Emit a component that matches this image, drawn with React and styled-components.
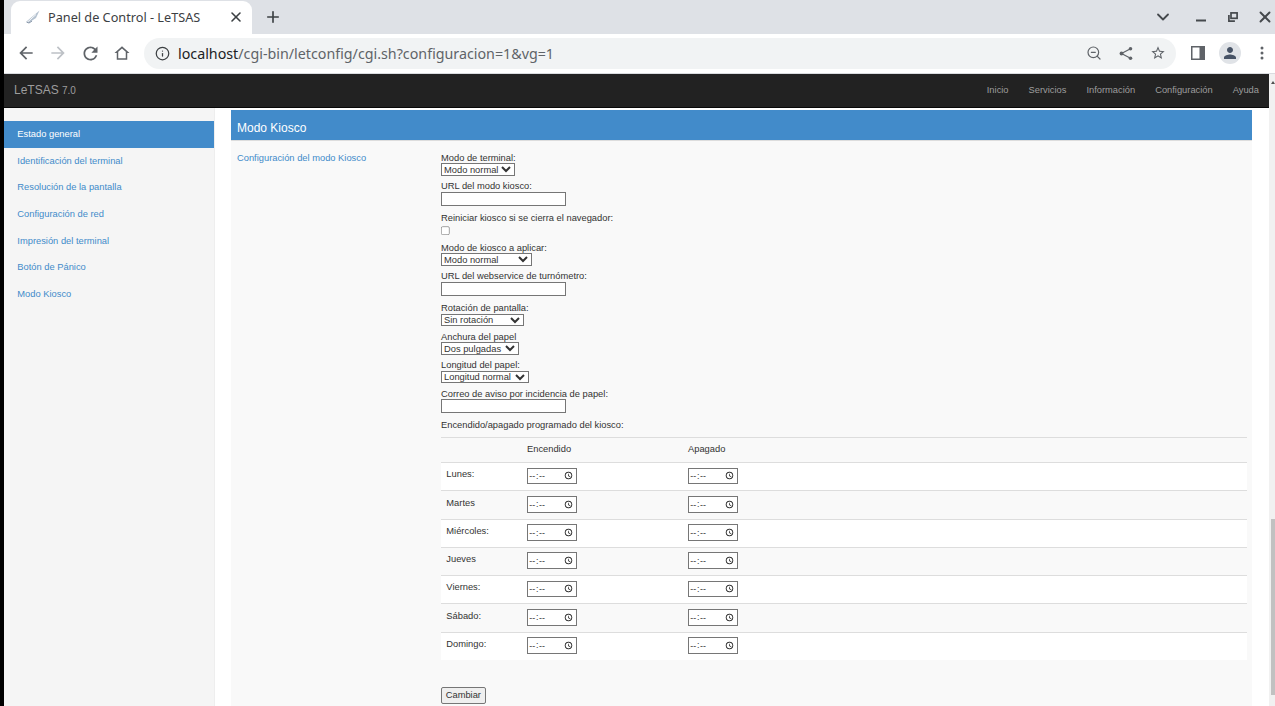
import React from 'react';
import styled, { createGlobalStyle } from 'styled-components';
import { Info, ZoomOut, ChevronDown, X, Plus } from 'lucide-react';

const Global = createGlobalStyle`
  html, body { margin: 0; padding: 0; height: 706px; overflow: hidden; background: #000; }
  * { box-sizing: border-box; }
  #root { height: 706px; }
`;

const Root = styled.div`
  display: flex;
  flex-direction: column;
  width: 1275px;
  height: 706px;
  padding-left: 4px;
  background: #000;
  overflow: hidden;
`;

// ---- browser frame
const TabStrip = styled.div`
  display: flex;
  align-items: flex-end;
  height: 34px;
  flex: none;
  background: #dee1e6;
  font-family: "Noto Sans", sans-serif;
`;

const Tab = styled.div`
  display: flex;
  align-items: center;
  width: 241px;
  height: 33px;
  margin-left: 7px;
  padding-left: 15px;
  padding-bottom: 1px;
  background: #fff;
  border-radius: 9px 9px 0 0;
  color: #3c4043;
  font-size: 12.7px;
`;

const TabTitle = styled.span`
  margin-left: 8px;
  flex: 1;
  white-space: nowrap;
`;

const TabClose = styled(X)`
  margin-right: 8px;
  color: #3c4043;
`;

const NewTab = styled(Plus)`
  align-self: center;
  margin-left: 12px;
  color: #3c4043;
`;

const WindowControls = styled.div`
  display: flex;
  align-self: center;
  gap: 12px;
  margin-left: auto;
  color: #45494d;
`;

const ControlCell = styled.span`
  display: flex;
  align-items: center;
  justify-content: center;
  width: 20px;
  height: 20px;
  margin-right: ${(p) => p.$after || 0}px;
`;

const Toolbar = styled.div`
  display: flex;
  align-items: center;
  height: 40px;
  flex: none;
  padding: 3px 0 4px 6px;
  background: #fff;
  border-bottom: 1px solid #dadce0;
  color: #5f6368;
`;

const IconCell = styled.span`
  display: flex;
  align-items: center;
  justify-content: center;
  width: 32px;
  flex: none;
  color: ${(p) => p.$color || '#5f6368'};
`;

const Omnibox = styled.div`
  display: flex;
  align-items: center;
  width: 1032px;
  height: 31px;
  flex: none;
  margin: 0 6px;
  padding: 0 2px 0 11px;
  border-radius: 16px;
  background: #f1f3f4;
  font-family: "Noto Sans", sans-serif;
  font-size: 14.27px;
  color: #5f6368;
`;

const Host = styled.span`
  margin-left: 8px;
  color: #202124;
`;

const OmniIcons = styled.div`
  display: flex;
  margin-left: auto;
`;

const Avatar = styled.div`
  display: flex;
  align-items: center;
  justify-content: center;
  width: 22px;
  height: 22px;
  border-radius: 50%;
  background: #e0e3e7;
`;

// ---- page
const Viewport = styled.div`
  display: flex;
  flex: 1;
  min-height: 0;
  background: #fff;
`;

const Page = styled.div`
  zoom: 0.6667;
  flex: 1;
  min-width: 0;
  font-family: "Liberation Sans", Arial, sans-serif;
  font-size: 14px;
  line-height: 20px;
  color: #333;
`;

const Navbar = styled.div`
  display: flex;
  align-items: center;
  height: 51px;
  background: #222;
  border-bottom: 1px solid #080808;
`;

const Brand = styled.a`
  padding: 0 15px;
  color: #9d9d9d;
  font-size: 18px;
  line-height: 20px;

  small {
    font-size: 15px;
    color: #9d9d9d;
  }
`;

const Menu = styled.nav`
  display: flex;
  margin-left: auto;
`;

const MenuLink = styled.a`
  padding: 0 15px;
  color: #9d9d9d;
`;

const Columns = styled.div`
  display: flex;
  height: 960px;
`;

const Sidebar = styled.ul`
  width: 316.25px;
  flex: none;
  margin: 0;
  padding: 20px 0 0;
  list-style: none;
  background: #f5f5f5;
  border-right: 1px solid #eee;
`;

const SideItem = styled.li`
  padding: 10px 20px;
  color: ${(p) => (p.$active ? '#fff' : '#428bca')};
  background: ${(p) => (p.$active ? '#428bca' : 'transparent')};
`;

const Main = styled.main`
  flex: 1;
  min-width: 0;
  padding: 3px 25.5px 0 24.25px;
`;

const Panel = styled.section`
  background: #f9f9f9;
  padding-bottom: 40px;
`;

const PanelHead = styled.h3`
  margin: 0;
  padding: 15px 9px 0;
  height: 46px;
  background: #428bca;
  border-bottom: 2px solid #ddd;
  color: #fff;
  font-size: 18px;
  font-weight: 400;
  line-height: 26px;
`;

const PanelBody = styled.div`
  display: flex;
  padding: 18px 7.5px 0 9px;
`;

const PanelLink = styled.a`
  width: 306px;
  flex: none;
  color: #428bca;
  line-height: 16px;
`;

const Form = styled.form`
  flex: 1;
  min-width: 0;
`;

const Label = styled.div`
  height: 16px;
  line-height: 16px;
  white-space: nowrap;
`;

const Select = styled.select`
  display: block;
  width: ${(p) => p.$w}px;
  height: 19px;
  margin-bottom: 8px;
  padding: 0;
  border: 1px solid #767676;
  border-radius: 0;
  background-color: #fff;
  font: inherit;
  font-size: 14px;
  line-height: normal;
  color: #333;
`;

const TextInput = styled.input`
  display: block;
  width: 187px;
  height: 21px;
  margin-bottom: 10.5px;
  padding: 1px 2px;
  border: 1px solid #767676;
  border-radius: 0;
  background: #fff;
`;

const Check = styled.input`
  display: block;
  width: 14px;
  height: 14px;
  margin: 4px 0 10.5px;
`;

const Table = styled.table`
  width: 100%;
  margin: 9px 0 41.5px;
  border-collapse: collapse;

  th, td {
    padding: 8px;
    text-align: left;
    vertical-align: top;
    font-weight: 400;
    border-top: 1px solid #ddd;
  }

  td { padding: 7px 8px 8.9px; }
  td:first-child { padding-top: 8px; }

  tbody tr:nth-child(odd) { background: #fff; }
`;

const TimeInput = styled.input`
  display: block;
  width: 75px;
  height: 25px;
  padding: 1px;
  border: 1px solid #767676;
  border-radius: 0;
  background: #fff;
  font-family: inherit;
  font-size: 13.33px;
  color: #333;

  &::-webkit-datetime-edit-ampm-field { display: none; }
`;

const SubmitButton = styled.button`
  display: block;
  width: 67px;
  height: 25px;
  padding: 0;
  border: 1px solid #767676;
  border-radius: 3px;
  background: #efefef;
  font: inherit;
  color: #333;
`;

const Scrollbar = styled.div`
  position: relative;
  width: 6px;
  flex: none;
  background: #f1f1f1;
`;

const ScrollArrow = styled.div`
  position: absolute;
  top: 7px;
  right: 0;
  border: 2px solid transparent;
  border-top: 0;
  border-bottom: 3px solid #505050;
`;

const Thumb = styled.div`
  position: absolute;
  top: 445px;
  right: 0;
  width: 4px;
  height: 176px;
  background: #c1c1c1;
`;

const Glyph = ({ size, d, rule }) => (
  <svg width={size} height={size} viewBox="0 0 24 24" fill="currentColor">
    <path d={d} fillRule={rule} />
  </svg>
);

const BACK = 'M20 11H7.83l5.59-5.59L12 4l-8 8 8 8 1.41-1.41L7.83 13H20v-2z';
const FORWARD = 'M12 4l-1.41 1.41L16.17 11H4v2h12.17l-5.58 5.59L12 20l8-8z';
const RELOAD = 'M17.65 6.35A7.958 7.958 0 0 0 12 4c-4.42 0-7.99 3.58-7.99 8s3.57 8 7.99 8c3.73 0 6.84-2.55 7.73-6h-2.08A5.99 5.99 0 0 1 12 18c-3.31 0-6-2.69-6-6s2.69-6 6-6c1.66 0 3.14.69 4.22 1.78L13 11h7V4l-2.35 2.35z';
const HOME = 'M12 3 2 12h3v9h14v-9h3L12 3zm0 2.9 5 4.5V19H7v-8.6l5-4.5z';
const STAR = 'M22 9.24l-7.19-.62L12 2 9.19 8.63 2 9.24l5.46 4.73L5.82 21 12 17.27 18.18 21l-1.63-7.03L22 9.24zM12 15.4l-3.76 2.27 1-4.28-3.32-2.88 4.38-.38L12 6.1l1.71 4.04 4.38.38-3.32 2.88 1 4.28L12 15.4z';
const PERSON = 'M12 12c2.21 0 4-1.79 4-4s-1.79-4-4-4-4 1.79-4 4 1.79 4 4 4zm0 2c-2.67 0-8 1.34-8 4v2h16v-2c0-2.66-5.33-4-8-4z';

const Favicon = () => (
  <svg width="14" height="14" viewBox="0 0 14 14">
    <path d="M0.5 11.5 L13.5 0.5 L10 8 L3 12.5 Z" fill="#b5c2d0" />
    <path d="M1 12.5 L10 4.5" stroke="#fff" strokeWidth="0.9" fill="none" />
    <path d="M0.5 12 L3 13 L6 11" stroke="#7f8fa3" strokeWidth="1" fill="none" />
  </svg>
);

const Minimize = () => (
  <svg width="10" height="12" viewBox="0 0 10 12">
    <path d="M0 9.5h10" stroke="currentColor" strokeWidth="2" />
  </svg>
);

const Restore = () => (
  <svg width="10" height="10" viewBox="0 0 10 10" fill="none" stroke="currentColor" strokeWidth="1.7">
    <rect x="3" y="0.9" width="6.1" height="5.4" />
    <path d="M0.9 3v6.1h6" />
  </svg>
);

const ShareIcon = () => (
  <svg width="14" height="15" viewBox="0 0 14 15" fill="currentColor" stroke="currentColor" strokeWidth="1.2">
    <path d="M11.5 2.7 2.5 7.5l9 4.8" fill="none" />
    <circle cx="11.5" cy="2.7" r="1.8" stroke="none" />
    <circle cx="2.5" cy="7.5" r="1.9" stroke="none" />
    <circle cx="11.5" cy="12.3" r="1.8" stroke="none" />
  </svg>
);

const SidePanelIcon = () => (
  <svg width="14" height="14" viewBox="0 0 14 14">
    <path d="M0 0h14v14H0z M1.5 1.5v11H8.500v-11z" fillRule="evenodd" fill="#5f6368" />
  </svg>
);

const Dots = () => (
  <svg width="4" height="14" viewBox="0 0 4 14" fill="currentColor">
    <circle cx="2" cy="2" r="1.5" />
    <circle cx="2" cy="7" r="1.5" />
    <circle cx="2" cy="12" r="1.5" />
  </svg>
);

const menu = ['Inicio', 'Servicios', 'Información', 'Configuración', 'Ayuda'];
const sections = [
  'Estado general',
  'Identificación del terminal',
  'Resolución de la pantalla',
  'Configuración de red',
  'Impresión del terminal',
  'Botón de Pánico',
  'Modo Kiosco',
];
const days = ['Lunes:', 'Martes', 'Miércoles:', 'Jueves', 'Viernes:', 'Sábado:', 'Domingo:'];

const App = () => (
  <Root>
    <Global />
    <TabStrip>
      <Tab>
        <Favicon />
        <TabTitle>Panel de Control - LeTSAS</TabTitle>
        <TabClose size={16} strokeWidth={2.4} />
      </Tab>
      <NewTab size={18} strokeWidth={2.2} />
      <WindowControls>
        <ControlCell $after={6}><ChevronDown size={20} strokeWidth={2.2} /></ControlCell>
        <ControlCell><Minimize /></ControlCell>
        <ControlCell><Restore /></ControlCell>
        <ControlCell><X size={18} strokeWidth={2.6} /></ControlCell>
      </WindowControls>
    </TabStrip>
    <Toolbar>
      <IconCell><Glyph size={20} d={BACK} /></IconCell>
      <IconCell $color="#bdc1c6"><Glyph size={20} d={FORWARD} /></IconCell>
      <IconCell><Glyph size={21} d={RELOAD} /></IconCell>
      <IconCell><Glyph size={18} d={HOME} /></IconCell>
      <Omnibox>
        <Info size={15} strokeWidth={2} color="#3c4043" />
        <Host>localhost</Host>
        <span>/cgi-bin/letconfig/cgi.sh?configuracion=1&amp;vg=1</span>
        <OmniIcons>
          <IconCell><ZoomOut size={16} strokeWidth={1.8} /></IconCell>
          <IconCell><ShareIcon /></IconCell>
          <IconCell><Glyph size={16} d={STAR} /></IconCell>
        </OmniIcons>
      </Omnibox>
      <IconCell><SidePanelIcon /></IconCell>
      <IconCell $color="#475366">
        <Avatar><Glyph size={18} d={PERSON} /></Avatar>
      </IconCell>
      <IconCell><Dots /></IconCell>
    </Toolbar>
    <Viewport>
      <Page>
        <Navbar>
          <Brand>LeTSAS <small>7.0</small></Brand>
          <Menu>
            {menu.map((m) => <MenuLink key={m}>{m}</MenuLink>)}
          </Menu>
        </Navbar>
        <Columns>
          <Sidebar>
            {sections.map((s, i) => <SideItem key={s} $active={i === 0}>{s}</SideItem>)}
          </Sidebar>
          <Main>
            <Panel>
              <PanelHead>Modo Kiosco</PanelHead>
              <PanelBody>
                <PanelLink>Configuración del modo Kiosco</PanelLink>
                <Form>
                  <Label>Modo de terminal:</Label>
                  <Select $w={111}><option>Modo normal</option></Select>
                  <Label>URL del modo kiosco:</Label>
                  <TextInput type="text" />
                  <Label>Reiniciar kiosco si se cierra el navegador:</Label>
                  <Check type="checkbox" />
                  <Label>Modo de kiosco a aplicar:</Label>
                  <Select $w={136}><option>Modo normal</option></Select>
                  <Label>URL del webservice de turnómetro:</Label>
                  <TextInput type="text" />
                  <Label>Rotación de pantalla:</Label>
                  <Select $w={124}><option>Sin rotación</option></Select>
                  <Label>Anchura del papel</Label>
                  <Select $w={117}><option>Dos pulgadas</option></Select>
                  <Label>Longitud del papel:</Label>
                  <Select $w={132}><option>Longitud normal</option></Select>
                  <Label>Correo de aviso por incidencia de papel:</Label>
                  <TextInput type="text" />
                  <Label>Encendido/apagado programado del kiosco:</Label>
                  <Table>
                    <colgroup>
                      <col width="121" />
                      <col width="241.5" />
                      <col />
                    </colgroup>
                    <thead>
                      <tr><th /><th>Encendido</th><th>Apagado</th></tr>
                    </thead>
                    <tbody>
                      {days.map((d) => (
                        <tr key={d}>
                          <td>{d}</td>
                          <td><TimeInput type="time" /></td>
                          <td><TimeInput type="time" /></td>
                        </tr>
                      ))}
                    </tbody>
                  </Table>
                  <SubmitButton type="button">Cambiar</SubmitButton>
                </Form>
              </PanelBody>
            </Panel>
          </Main>
        </Columns>
      </Page>
      <Scrollbar>
        <ScrollArrow />
        <Thumb />
      </Scrollbar>
    </Viewport>
  </Root>
);

export default App;
